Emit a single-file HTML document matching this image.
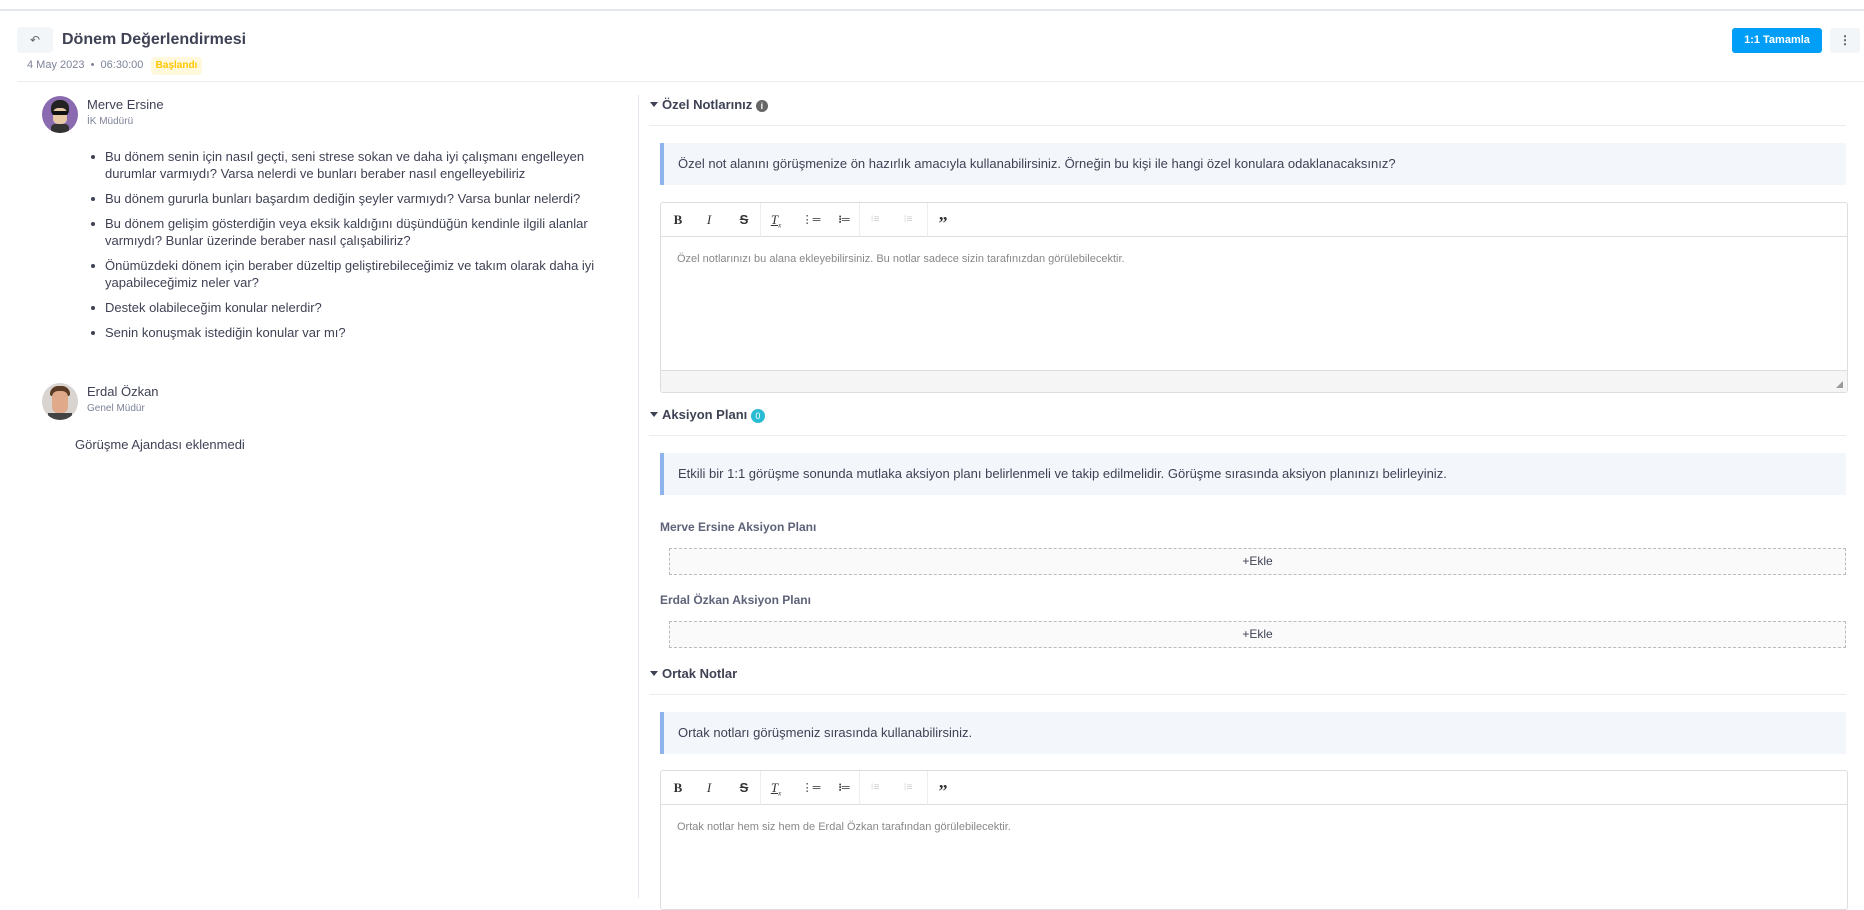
<!DOCTYPE html>
<html><head><meta charset="utf-8"><style>
*{box-sizing:border-box;margin:0;padding:0}
body{width:1864px;height:898px;overflow:hidden;background:#fff;font-family:"Liberation Sans",sans-serif;color:#3f4254;position:relative}
.a{position:absolute;white-space:nowrap}
.hline{position:absolute;height:1px;background:#ebedf3}
.tri{display:inline-block;width:0;height:0;border-left:4px solid transparent;border-right:4px solid transparent;border-top:5px solid #3f4254;margin-right:4px;vertical-align:2px}
.sh{font-size:13px;font-weight:bold;color:#3f4254}
.info{position:absolute;left:660px;width:1186px;height:42px;background:#f3f6fb;border-left:4px solid #8db5ec;font-size:13px;line-height:42px;padding-left:14px;color:#3f4254}
.ed{position:absolute;left:660px;width:1188px;border:1px solid #ddd;border-radius:3px}
.tb{height:34px;border-bottom:1px solid #ddd;position:relative}
.ic{position:absolute;top:0;height:34px;line-height:34px;font-size:13px;color:#333;text-align:center;width:20px;margin-left:-10px}
.sep{position:absolute;top:0;width:1px;height:34px;background:#eee}
.ph{font-size:11px;color:#888;padding:16px 0 0 16px}
.lbl{position:absolute;left:660px;font-size:12px;font-weight:bold;color:#5e6278}
.ekle{position:absolute;left:669px;width:1177px;height:27px;border:1px dashed #bbb;background:#fafafa;text-align:center;line-height:25px;font-size:12px;color:#3f4254}
ul{position:absolute;left:91px;top:148px;width:520px;list-style:none;font-size:13px;line-height:17px}
li{position:relative;padding-left:14px;margin-bottom:8px}
li:before{content:"";position:absolute;left:0;top:7px;width:4px;height:4px;border-radius:50%;background:#3f4254}
</style></head><body>
<div class="hline" style="left:0;top:9px;width:1864px;background:#e4e6ef;height:2px"></div>
<div class="a" style="left:17px;top:27px;width:36px;height:26px;background:#f3f6f9;border-radius:4px;text-align:center;line-height:26px;font-size:12px;color:#666">&#8630;</div>
<div class="a" style="left:62px;top:31px;font-size:16px;font-weight:bold;color:#3f4254">Dönem Değerlendirmesi</div>
<div class="a" style="left:27px;top:59px;font-size:11px;color:#7e8299">4 May 2023 &nbsp;•&nbsp; 06:30:00</div>
<div class="a" style="left:151px;top:57px;width:51px;height:18px;background:#fff8dd;border-radius:4px;color:#ffc700;font-size:10px;font-weight:bold;text-align:center;line-height:18px">Başlandı</div>
<div class="a" style="left:1732px;top:28px;width:90px;height:25px;background:#009ef7;border-radius:3px;color:#fff;font-size:11px;font-weight:bold;text-align:center;line-height:25px">1:1 Tamamla</div>
<div class="a" style="left:1830px;top:28px;width:30px;height:25px;background:#f3f6f9;border-radius:3px;color:#555;font-size:12px;font-weight:bold;text-align:center;line-height:25px">&#8942;</div>
<div class="hline" style="left:17px;top:81px;width:1847px"></div>
<div class="a" style="left:638px;top:95px;width:1px;height:803px;background:#e4e6ef"></div>

<div class="a" style="left:42px;top:96px;width:36px;height:37px;border-radius:50%;background:#8a6bb0;overflow:hidden">
<div style="position:absolute;left:9px;top:4px;width:18px;height:14px;background:#222;border-radius:8px 8px 3px 3px"></div>
<div style="position:absolute;left:11px;top:12px;width:14px;height:16px;background:#e8c9a6;border-radius:5px"></div>
<div style="position:absolute;left:10px;top:15px;width:16px;height:4px;background:#111;border-radius:2px"></div>
<div style="position:absolute;left:9px;top:28px;width:18px;height:10px;background:#333;border-radius:4px 4px 0 0"></div></div>
<div class="a" style="left:87px;top:97px;font-size:13px">Merve Ersine</div>
<div class="a" style="left:87px;top:116px;font-size:10px;color:#7e8299">İK Müdürü</div>
<ul>
<li>Bu dönem senin için nasıl geçti, seni strese sokan ve daha iyi çalışmanı engelleyen durumlar varmıydı? Varsa nelerdi ve bunları beraber nasıl engelleyebiliriz</li>
<li>Bu dönem gururla bunları başardım dediğin şeyler varmıydı? Varsa bunlar nelerdi?</li>
<li>Bu dönem gelişim gösterdiğin veya eksik kaldığını düşündüğün kendinle ilgili alanlar varmıydı? Bunlar üzerinde beraber nasıl çalışabiliriz?</li>
<li>Önümüzdeki dönem için beraber düzeltip geliştirebileceğimiz ve takım olarak daha iyi yapabileceğimiz neler var?</li>
<li>Destek olabileceğim konular nelerdir?</li>
<li>Senin konuşmak istediğin konular var mı?</li>
</ul>
<div class="a" style="left:42px;top:383px;width:36px;height:37px;border-radius:50%;background:#d9d4cf;overflow:hidden">
<div style="position:absolute;left:8px;top:3px;width:20px;height:10px;background:#5a3b25;border-radius:8px 8px 2px 2px"></div>
<div style="position:absolute;left:10px;top:8px;width:16px;height:22px;background:#e0a98a;border-radius:6px"></div>
<div style="position:absolute;left:6px;top:30px;width:24px;height:8px;background:#444"></div></div>
<div class="a" style="left:87px;top:384px;font-size:13px">Erdal Özkan</div>
<div class="a" style="left:87px;top:403px;font-size:10px;color:#7e8299">Genel Müdür</div>
<div class="a" style="left:75px;top:437px;font-size:13px">Görüşme Ajandası eklenmedi</div>

<div class="a sh" style="left:650px;top:97px"><span class="tri"></span>Özel Notlarınız <span style="display:inline-block;width:12px;height:12px;border-radius:50%;background:#666;color:#fff;font-size:9px;text-align:center;line-height:12px;vertical-align:0">i</span></div>
<div class="hline" style="left:649px;top:125px;width:1197px"></div>
<div class="info" style="top:143px">Özel not alanını görüşmenize ön hazırlık amacıyla kullanabilirsiniz. Örneğin bu kişi ile hangi özel konulara odaklanacaksınız?</div>
<div class="ed" style="top:202px;height:191px">
<div class="tb">
<span class="ic" style="left:17px;font-weight:bold;font-family:'Liberation Serif',serif">B</span>
<span class="ic" style="left:48px;font-style:italic;font-family:'Liberation Serif',serif">I</span>
<span class="ic" style="left:83px;font-weight:bold;text-decoration:line-through">S</span>
<span class="sep" style="left:99px"></span>
<span class="ic" style="left:115px;font-style:italic;text-decoration:underline;font-family:'Liberation Serif',serif">T<sub style="font-size:7px">x</sub></span>
<span class="ic" style="left:150px;font-size:11px">⋮═</span>
<span class="ic" style="left:183px;font-size:11px;font-weight:bold">⁝═</span>
<span class="sep" style="left:198px"></span>
<span class="ic" style="left:214px;font-size:10px;color:#ccc">⁝≡</span>
<span class="ic" style="left:247px;font-size:10px;color:#ccc">⁝≡</span>
<span class="sep" style="left:266px"></span>
<span class="ic" style="left:282px;font-size:18px;font-weight:bold;font-family:'Liberation Serif',serif;line-height:40px">”</span>
</div>
<div class="ph">Özel notlarınızı bu alana ekleyebilirsiniz. Bu notlar sadece sizin tarafınızdan görülebilecektir.</div>
<div style="position:absolute;left:0;bottom:0;width:100%;height:22px;background:#f5f5f5;border-top:1px solid #ddd"><div style="position:absolute;right:4px;bottom:4px;width:0;height:0;border-left:7px solid transparent;border-bottom:7px solid #999"></div></div>
</div>

<div class="a sh" style="left:650px;top:407px"><span class="tri"></span>Aksiyon Planı <span style="display:inline-block;width:14px;height:14px;border-radius:50%;background:#2bbcd4;color:#fff;font-size:9px;text-align:center;line-height:14px;font-weight:normal">0</span></div>
<div class="hline" style="left:649px;top:435px;width:1197px"></div>
<div class="info" style="top:453px">Etkili bir 1:1 görüşme sonunda mutlaka aksiyon planı belirlenmeli ve takip edilmelidir. Görüşme sırasında aksiyon planınızı belirleyiniz.</div>
<div class="lbl" style="top:520px">Merve Ersine Aksiyon Planı</div>
<div class="ekle" style="top:548px">+Ekle</div>
<div class="lbl" style="top:593px">Erdal Özkan Aksiyon Planı</div>
<div class="ekle" style="top:621px">+Ekle</div>

<div class="a sh" style="left:650px;top:666px"><span class="tri"></span>Ortak Notlar</div>
<div class="hline" style="left:649px;top:694px;width:1197px"></div>
<div class="info" style="top:712px">Ortak notları görüşmeniz sırasında kullanabilirsiniz.</div>
<div class="ed" style="top:770px;height:140px">
<div class="tb">
<span class="ic" style="left:17px;font-weight:bold;font-family:'Liberation Serif',serif">B</span>
<span class="ic" style="left:48px;font-style:italic;font-family:'Liberation Serif',serif">I</span>
<span class="ic" style="left:83px;font-weight:bold;text-decoration:line-through">S</span>
<span class="sep" style="left:99px"></span>
<span class="ic" style="left:115px;font-style:italic;text-decoration:underline;font-family:'Liberation Serif',serif">T<sub style="font-size:7px">x</sub></span>
<span class="ic" style="left:150px;font-size:11px">⋮═</span>
<span class="ic" style="left:183px;font-size:11px;font-weight:bold">⁝═</span>
<span class="sep" style="left:198px"></span>
<span class="ic" style="left:214px;font-size:10px;color:#ccc">⁝≡</span>
<span class="ic" style="left:247px;font-size:10px;color:#ccc">⁝≡</span>
<span class="sep" style="left:266px"></span>
<span class="ic" style="left:282px;font-size:18px;font-weight:bold;font-family:'Liberation Serif',serif;line-height:40px">”</span>
</div>
<div class="ph">Ortak notlar hem siz hem de Erdal Özkan tarafından görülebilecektir.</div>
</div>
</body></html>
